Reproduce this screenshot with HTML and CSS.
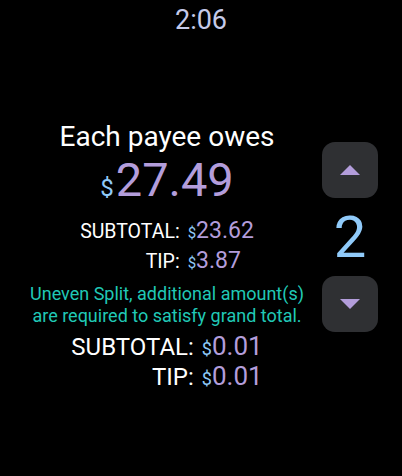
FILE: index.html
```html
<!DOCTYPE html>
<html>
<head>
<meta charset="utf-8">
<link rel="stylesheet" href="styles.css">
</head>
<body>
<div class="screen">
  <div class="clock">2:06</div>
  <div class="main">
    <div class="info">
      <div class="title">Each payee owes</div>
      <div class="total"><span class="cur">$</span>27.49</div>
      <div class="rows rows-a">
        <span class="label">SUBTOTAL:</span><span class="value"><span class="cur">$</span>23.62</span>
        <span class="label">TIP:</span><span class="value"><span class="cur">$</span>3.87</span>
      </div>
      <div class="note">Uneven Split, additional amount(s)<br>are required to satisfy grand total.</div>
      <div class="rows rows-b">
        <span class="label">SUBTOTAL:</span><span class="value"><span class="cur">$</span>0.01</span>
        <span class="label">TIP:</span><span class="value"><span class="cur">$</span>0.01</span>
      </div>
    </div>
    <div class="stepper">
      <button class="step-btn" aria-label="Increase">
        <svg width="20" height="10" viewBox="0 0 20 10"><polygon points="10,0 20,10 0,10" fill="#b39ddb"/></svg>
      </button>
      <div class="count">2</div>
      <button class="step-btn" aria-label="Decrease">
        <svg width="20" height="10" viewBox="0 0 20 10"><polygon points="0,0 20,0 10,10" fill="#b39ddb"/></svg>
      </button>
    </div>
  </div>
</div>
</body>
</html>
```
FILE: styles.css
```css
html, body {
  margin: 0;
  padding: 0;
  background: #000;
}
* {
  box-sizing: border-box;
}
.screen {
  width: 402px;
  height: 476px;
  background: #000;
  font-family: Roboto, "Noto Sans", sans-serif;
  color: #fff;
  overflow: hidden;
}
.clock {
  text-align: center;
  font-size: 27px;
  line-height: 40px;
  color: #c5cae9;
}
.main {
  display: flex;
}
.info {
  width: 322px;
  padding-left: 12px;
  padding-top: 79px;
  display: flex;
  flex-direction: column;
  align-items: center;
}
.title {
  font-size: 28px;
  line-height: 35px;
}
.total {
  font-size: 47px;
  line-height: 52px;
  color: #b39ddb;
}
.total .cur {
  font-size: 24px;
  margin-right: 2px;
}
.cur {
  color: #90caf9;
  line-height: 0;
}
.rows {
  display: grid;
  grid-template-columns: auto auto;
  column-gap: 8px;
  align-items: baseline;
}
.label {
  justify-self: end;
  color: #fff;
}
.value {
  color: #b39ddb;
}
.rows-a {
  margin-top: 10px;
  font-size: 19.5px;
}
.rows-a > span {
  line-height: 29px;
}
.rows-a .value {
  font-size: 23px;
}
.rows-a .cur {
  font-size: 15px;
}
.note {
  margin-top: 7px;
  font-size: 18px;
  line-height: 22px;
  color: #20c9b6;
  text-align: center;
}
.rows-b {
  margin-top: 5px;
  font-size: 24px;
}
.rows-b > span {
  line-height: 29px;
}
.rows-b .value {
  font-size: 26px;
}
.rows-b .cur {
  font-size: 18px;
}
.stepper {
  padding-top: 102px;
  width: 56px;
  display: flex;
  flex-direction: column;
  align-items: center;
}
.step-btn {
  width: 56px;
  height: 56px;
  border: none;
  border-radius: 13px;
  background: #2f3033;
  padding: 0;
  display: flex;
  align-items: center;
  justify-content: center;
}
.count {
  height: 78px;
  font-size: 58px;
  line-height: 78px;
  color: #90caf9;
  text-align: center;
}
```
